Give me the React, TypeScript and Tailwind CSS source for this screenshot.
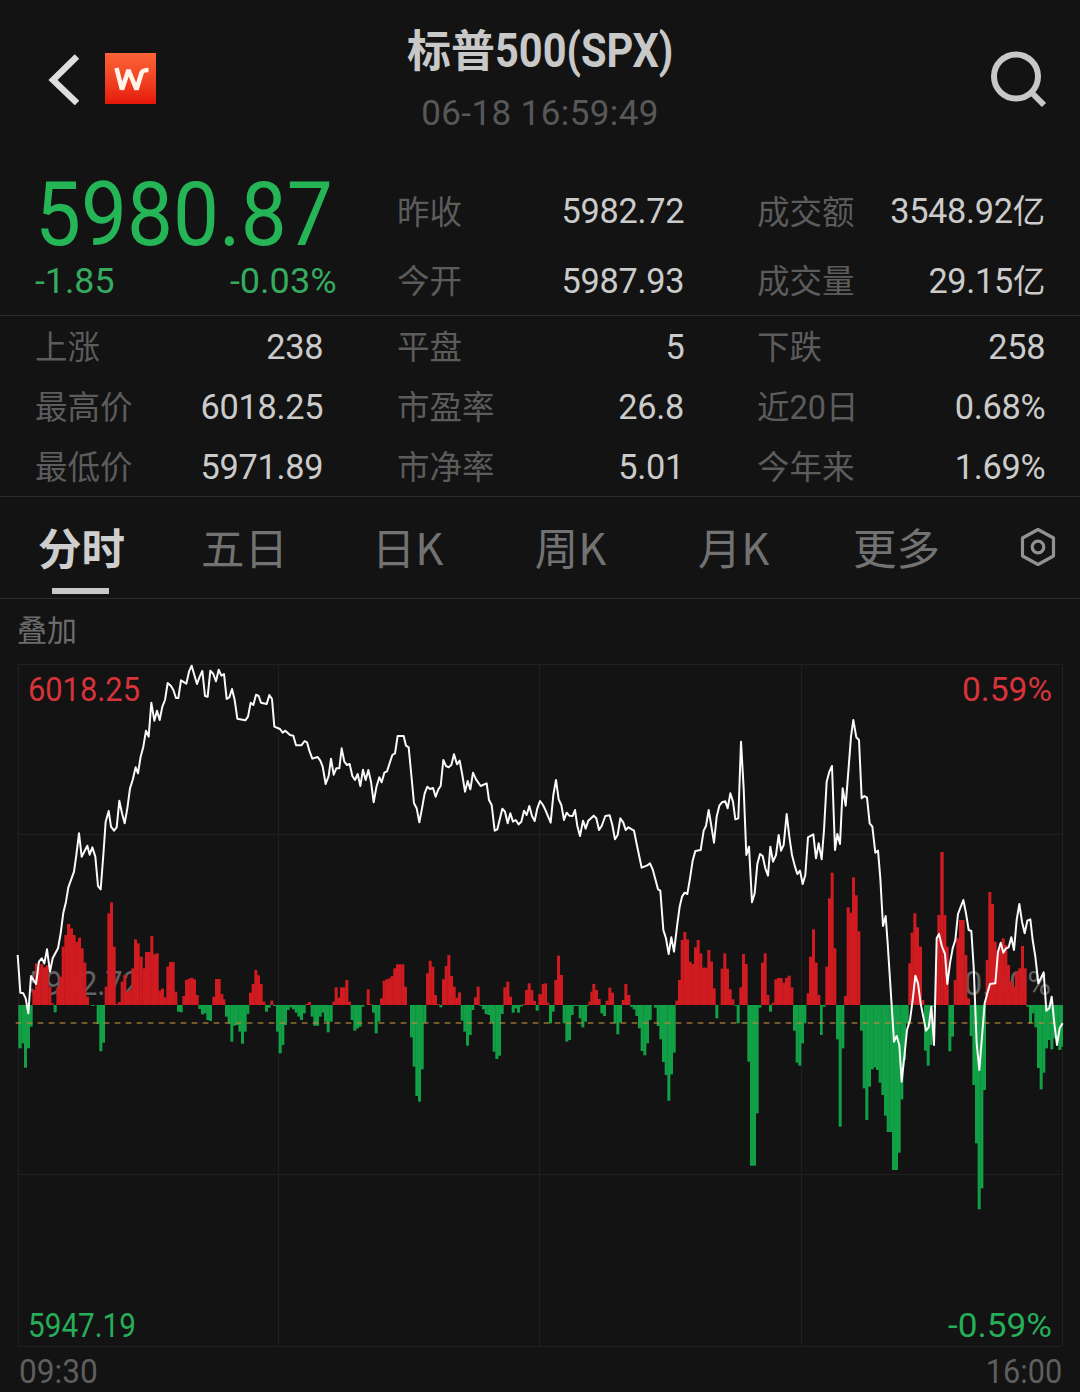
import React from "react";

type Pt = [number, number];
type Chunk = { x: number; y: number; data: number[] };

// Chart series are stored in third-of-a-pixel units relative to each chunk's origin.
const BASE = 1005;

const BARS: Chunk[] = [
  {
    x: 0,
    y: 880,
    data: [
      55, 505, 64, 490, 72, 563, 80, 505, 89, 440, 97, 330, 105, 250, 113, 262, 121, 252, 129, 262, 137, 256, 145, 320,
      153, 370, 161, 397, 169, 322, 177, 290, 185, 200, 193, 165, 201, 132, 210, 145, 218, 165, 226, 185, 234, 173, 242,
      205, 250, 248, 258, 350, 266, 375, 274, 378, 282, 375, 290, 432, 298, 514, 306, 488, 314, 320, 322, 100, 330, 67,
      338, 200, 346, 372, 354, 366, 362, 305, 370, 285, 378, 335, 386, 330, 394, 265, 402, 178, 410, 190, 418, 230, 427,
      265, 435, 216, 443, 216, 451, 168, 459, 223, 467, 220, 475, 332, 483, 326, 491, 352, 499, 260, 507, 246, 515, 246,
      523, 335, 531, 395, 539, 397, 547, 348, 555, 300, 563, 296, 571, 293, 579, 298, 587, 345, 595, 387, 603, 403, 611,
      400, 619, 420, 627, 423, 635, 375, 637, 350, 645, 297, 653, 297, 661, 342, 669, 358, 675, 410, 683, 430, 691, 485,
      699, 437, 707, 435, 715, 455, 723, 491, 731, 455, 739, 402, 747, 338, 755, 312, 763, 270, 771, 286, 779, 312, 787,
      365, 795, 395, 803, 383, 811, 362, 819, 378, 828, 375,
    ],
  },
  {
    x: 270,
    y: 700,
    data: [
      18, 995, 26, 1060, 34, 1035, 42, 975, 50, 930, 58, 922, 66, 928, 74, 938, 82, 950, 90, 960, 98, 940, 106, 912, 114,
      906, 122, 950, 130, 977, 138, 977, 146, 950, 154, 938, 162, 965, 170, 997, 178, 965, 187, 905, 194, 862, 202, 893,
      210, 862, 218, 862, 226, 840, 234, 905, 242, 960, 250, 992, 258, 985, 266, 980, 274, 920, 282, 915, 290, 868, 298,
      912, 306, 938, 314, 1000, 322, 965, 330, 895, 338, 842, 346, 838, 354, 835, 362, 828, 370, 805, 378, 793, 386, 793,
      394, 793, 402, 860, 410, 915, 420, 1012, 428, 1100, 436, 1188, 444, 1205, 452, 1108, 460, 968, 468, 820, 476, 782,
      484, 800, 492, 885, 500, 912, 508, 922, 516, 838, 524, 798, 532, 765, 540, 828, 548, 860, 556, 893, 564, 877, 572,
      962, 580, 995, 588, 1037, 596, 1005, 604, 930, 612, 892, 620, 860, 628, 918, 636, 928, 644, 942, 652, 945, 660, 968,
      668, 1055, 676, 1077, 684, 1067, 692, 942, 700, 862, 709, 845, 717, 890, 725, 938, 733, 925, 741, 938, 749, 920,
      757, 912, 765, 870, 773, 850, 781, 870, 789, 903, 797, 932, 805, 882, 813, 915,
    ],
  },
  {
    x: 540,
    y: 740,
    data: [
      0, 765, 5, 732, 13, 730, 20, 788, 27, 850, 35, 815, 43, 720, 51, 647, 59, 705, 68, 850, 76, 905, 84, 900, 92, 825,
      100, 798, 108, 798, 116, 835, 124, 862, 132, 845, 140, 798, 145, 785, 151, 755, 157, 732, 165, 750, 173, 777, 181,
      820, 189, 828, 197, 782, 205, 743, 213, 758, 221, 850, 229, 883, 237, 848, 245, 780, 253, 732, 261, 765, 270, 800,
      278, 808, 286, 828, 294, 865, 302, 933, 310, 946, 318, 910, 326, 840, 334, 795, 342, 803, 350, 858, 358, 898, 366,
      966, 374, 1005, 382, 1082, 390, 1003, 398, 938, 406, 782, 414, 720, 422, 600, 430, 576, 438, 598, 446, 665, 454,
      672, 462, 622, 470, 600, 478, 640, 486, 683, 494, 683, 502, 630, 510, 665, 518, 745, 526, 835, 534, 795, 542, 686,
      550, 640, 558, 686, 566, 748, 574, 778, 582, 797, 590, 850, 598, 742, 606, 642, 614, 672, 622, 965, 630, 1277, 647,
      1120, 655, 803, 663, 668, 671, 640, 679, 765, 687, 815, 695, 788, 703, 718, 711, 714, 719, 714, 727, 728, 735, 714,
      743, 707, 751, 742, 759, 872, 767, 968, 775, 977, 783, 910, 791, 850, 798, 795,
    ],
  },
  {
    x: 800,
    y: 940,
    data: [
      -2, 220, 3, 220, 5, 195, 20, 160, 27, 50, 36, -32, 44, 68, 52, 165, 60, 285, 67, 200, 76, 80, 84, -125, 92, -202,
      100, 25, 108, 298, 116, 560, 124, 325, 132, 168, 140, -98, 148, -82, 156, -188, 164, -134, 172, -26, 180, 272, 188,
      445, 196, 540, 204, 440, 212, 388, 220, 382, 228, 390, 236, 428, 244, 465, 252, 527, 260, 576, 268, 576, 276, 690,
      284, 690, 293, 638, 301, 478, 309, 360, 317, 250, 325, 70, 332, -22, 340, -80, 348, -38, 356, 20, 365, 180, 372,
      332, 380, 377, 388, 315, 396, 200, 404, 175, 408, 0, 412, -75, 421, -264, 430, -75, 438, 20, 445, 334, 453, 290,
      461, 120, 469, -5, 477, -60, 485, -60, 493, 45, 501, 175, 509, 288, 517, 435, 525, 610, 533, 808, 541, 745, 549,
      450, 557, 60, 565, -144, 573, -108, 581, 5, 589, 38, 597, 20, 605, -5, 613, 15, 621, 75, 629, 125, 637, 140, 645,
      95, 655, 85, 663, 18, 671, 85, 679, 200, 687, 250, 695, 220, 703, 262, 711, 384, 719, 448, 727, 398, 735, 325, 743,
      300, 751, 328, 759, 295, 767, 300, 775, 330, 783, 320, 788, 195,
    ],
  },
];

const PRICE: Chunk[] = [
  {
    x: 0,
    y: 880,
    data: [
      53, 225, 61, 338, 70, 340, 77, 355, 85, 400, 93, 288, 108, 312, 117, 245, 125, 235, 133, 250, 141, 208, 150, 275,
      158, 235, 174, 205, 182, 160, 190, 98, 198, 65, 205, 22, 222, -25, 229, -75, 237, -140, 245, -70, 262, -103, 269,
      -76, 277, -98, 286, -70, 294, 18, 302, 28, 310, -75, 317, -175, 326, -207, 333, -160, 342, -148, 350, -158, 358,
      -238, 366, -200, 374, -170, 382, -215, 390, -275, 398, -300, 407, -338, 414, -320, 422, -370, 430, -400, 438, -448,
      446, -430, 454, -532, 463, -478, 471, -508, 479, -480, 487, -520, 495, -540, 503, -591, 513, -582, 520, -570, 528,
      -546, 535, -546, 543, -599, 559, -589, 567, -625, 575, -643, 583, -615, 591, -588, 599, -610, 607, -627, 615, -552,
      623, -550, 631, -628, 640, -618, 648, -596, 656, -631, 664, -613, 672, -618, 680, -543, 688, -548, 696, -573, 704,
      -540, 712, -484, 736, -479, 744, -490, 752, -532, 760, -525, 768, -556, 776, -552, 783, -532, 800, -528, 808, -555,
      816, -543,
    ],
  },
  {
    x: 270,
    y: 700,
    data: [
      13, 80, 30, 87, 38, 98, 46, 92, 60, 105, 70, 107, 78, 136, 94, 136, 104, 123, 111, 127, 119, 155, 127, 176, 143,
      171, 151, 182, 158, 200, 167, 252, 176, 228, 183, 176, 191, 224, 199, 205, 208, 205, 215, 145, 223, 185, 231, 195,
      239, 192, 247, 228, 255, 240, 263, 222, 271, 258, 279, 209, 287, 240, 295, 210, 303, 245, 311, 307, 319, 262, 328,
      232, 335, 247, 343, 218, 351, 214, 367, 165, 375, 160, 383, 108, 401, 108, 408, 137, 416, 142, 424, 225, 432, 310,
      440, 325, 448, 367, 456, 325, 464, 280, 472, 260, 480, 267, 489, 264, 497, 290, 505, 268, 512, 258, 520, 180, 528,
      198, 536, 202, 544, 195, 552, 163, 561, 193, 569, 182, 577, 225, 585, 275, 593, 243, 601, 268, 609, 218, 618, 238,
      632, 258, 650, 250, 657, 300, 665, 315, 674, 392, 682, 388, 697, 326, 705, 335, 713, 370, 721, 340, 729, 365, 737,
      360, 746, 373, 754, 365, 762, 332, 770, 345, 778, 318, 786, 348, 794, 363, 802, 325,
    ],
  },
  {
    x: 540,
    y: 740,
    data: [
      0, 183, 9, 195, 17, 212, 32, 248, 40, 165, 48, 120, 56, 178, 64, 195, 72, 240, 80, 218, 88, 227, 98, 228, 105, 210,
      112, 258, 120, 288, 129, 242, 137, 266, 145, 242, 161, 227, 169, 235, 177, 270, 185, 258, 196, 228, 209, 226, 217,
      255, 225, 298, 233, 285, 241, 235, 250, 248, 257, 270, 265, 262, 282, 272, 290, 312, 305, 383, 322, 376, 330, 370,
      338, 388, 346, 418, 354, 448, 361, 452, 370, 570, 378, 595, 386, 642, 394, 592, 402, 635, 411, 560, 419, 500, 426,
      470, 434, 458, 442, 462, 450, 415, 458, 362, 466, 333, 482, 330, 491, 272, 498, 258, 506, 210, 514, 258, 522, 308,
      530, 230, 538, 197, 546, 187, 556, 184, 563, 205, 571, 160, 579, 185, 586, 238, 595, 235, 603, 5, 611, 145, 619,
      345, 627, 320, 636, 487, 644, 460, 652, 372, 660, 342, 668, 348, 676, 385, 684, 407, 691, 320, 699, 365, 708, 345,
      716, 285, 723, 332, 731, 315, 740, 222, 748, 290, 756, 345, 765, 380, 772, 402, 780, 392,
    ],
  },
  {
    x: 800,
    y: 940,
    data: [
      8, -168, 16, -195, 24, -308, 40, -317, 48, -245, 56, -290, 65, -242, 72, -330, 80, -475, 88, -505, 96, -522, 105,
      -270, 112, -318, 120, -288, 128, -455, 137, -403, 145, -505, 153, -610, 160, -660, 169, -608, 177, -600, 185, -425,
      193, -432, 201, -427, 209, -350, 217, -340, 226, -262, 234, -268, 241, -185, 249, -42, 257, -72, 263, 10, 282, 305,
      290, 288, 298, 315, 305, 425, 313, 350, 321, 270, 330, 240, 338, 180, 346, 107, 354, 130, 362, 190, 378, 272, 386,
      262, 394, 200, 402, 315, 407, 120, 410, -5, 417, -18, 426, 20, 435, 42, 442, 132, 450, 70, 458, 25, 466, 0, 474,
      -78, 490, -120, 498, -80, 506, -30, 514, -27, 521, 80, 530, 310, 538, 390, 546, 290, 554, 190, 562, 160, 570, 132,
      586, 130, 594, 35, 602, 8, 610, 38, 618, 25, 626, 22, 634, -8, 642, 30, 650, -60, 658, -108, 666, -55, 674, -20,
      682, -58, 691, -62, 698, 0, 706, 50, 715, 130, 731, 97, 739, 212, 748, 205, 755, 170, 763, 250, 771, 315, 779, 265,
      788, 250,
    ],
  },
];

function expand(chunk: Chunk): Pt[] {
  const out: Pt[] = [];
  for (let i = 0; i < chunk.data.length; i += 2) {
    out.push([chunk.x + chunk.data[i] / 3, chunk.y + chunk.data[i + 1] / 3]);
  }
  return out;
}

const barPoints = BARS.flatMap(expand);
const pricePath = PRICE.flatMap(expand)
  .map(([x, y]) => `${x.toFixed(2)},${y.toFixed(2)}`)
  .join(" ");

const LABEL = "pt-[2px] text-[32.5px] text-[#5c5c5c]";
const FONT = "font-[Roboto,'Noto_Sans_CJK_SC',sans-serif]";

function Stat({ label, value, unit }: { label: string; value: string; unit?: string }) {
  return (
    <div className="flex items-center justify-between pt-[2px] whitespace-nowrap">
      <span className={LABEL}>{label}</span>
      <span className="origin-right scale-x-[0.98] text-[35px] tracking-[-0.3px] text-[#cbcbcb]">
        {value}
        {unit && <span className="text-[33px]">{unit}</span>}
      </span>
    </div>
  );
}

function Chart() {
  return (
    <svg width="1080" height="688" viewBox="0 661 1080 688" className="block">
      <g stroke="#202020" strokeWidth="1" fill="none">
        <path d="M18 664.5H1062M18 834.5H1062M18 1174.5H1062M18 1346.5H1062" />
        <path d="M18.5 664V1346M278.5 664V1346M539.5 664V1346M801.5 664V1346M1062.5 664V1346" />
      </g>
      <g className={FONT} fontSize="32.5" fill="#626262">
        <text x="28" y="995" textLength="112" lengthAdjust="spacingAndGlyphs">5982.72</text>
        <text x="1051" y="995" textAnchor="end" textLength="87" lengthAdjust="spacingAndGlyphs">0.00%</text>
      </g>
      {barPoints.slice(0, -1).map(([x, y], i) => {
        const w = barPoints[i + 1][0] - x;
        const h = Math.abs(y - BASE);
        if (w <= 0 || h < 0.1) return null;
        return (
          <rect key={i} x={x} y={Math.min(y, BASE)} width={w + 0.35} height={h} fill={y < BASE ? "#d01b21" : "#12a046"} />
        );
      })}
      <path d="M15.7 1023H1062" stroke="#b98a3c" strokeOpacity="0.8" strokeWidth="1.3" strokeDasharray="5.7 5.3" />
      <polyline points={pricePath} fill="none" stroke="#fafafa" strokeWidth="2" strokeLinejoin="round" />
      <g className={FONT} fontSize="32.5">
        <text x="28" y="700.5" fill="#d8333b" textLength="112" lengthAdjust="spacingAndGlyphs">6018.25</text>
        <text x="1052" y="700.5" fill="#d8333b" textAnchor="end" textLength="90" lengthAdjust="spacingAndGlyphs">0.59%</text>
        <text x="28" y="1336.5" fill="#27ad58" textLength="108" lengthAdjust="spacingAndGlyphs">5947.19</text>
        <text x="1052" y="1336.5" fill="#27ad58" textAnchor="end" textLength="104" lengthAdjust="spacingAndGlyphs">-0.59%</text>
      </g>
    </svg>
  );
}

const TABS = ["分时", "五日", "日K", "周K", "月K", "更多"];

export default function App() {
  return (
    <div className={`h-[1392px] w-[1080px] overflow-hidden bg-[#131313] leading-none ${FONT}`}>
      <header className="flex h-[171px] justify-between">
        <div className="flex w-[300px] gap-[26px] pt-[53px] pl-[47px]">
          <svg width="32" height="52" viewBox="0 0 32 52" fill="none" stroke="#dedede" strokeWidth="6.4">
            <path d="M30 3.5L6 27L30 50" />
          </svg>
          <div className="flex h-[51px] w-[51px] items-center justify-center bg-linear-to-b from-[#fb6236] to-[#e61408]">
            <svg width="38" height="28" viewBox="0 0 38 28" fill="none" stroke="#fff3ea" strokeWidth="4.6" strokeLinejoin="bevel">
              <path d="M4.500 3L10 24.500L16.500 5L24.500 24.500L29.500 8Q30.500 5 36.500 5" />
            </svg>
          </div>
        </div>
        <div className="flex flex-col items-center pt-[26px]">
          <h1 className="flex h-[50px] w-[266px] items-center font-bold whitespace-nowrap text-[#c8c8c8]">
            <span className="w-[88px] pt-[2px] text-[44px]">标普</span>
            <span className="w-[178px] origin-left scale-x-[0.865] text-[48px]">500(SPX)</span>
          </h1>
          <p className="mt-[20px] text-[35px] tracking-[0.4px] whitespace-nowrap text-[#585858]">06-18 16:59:49</p>
        </div>
        <div className="flex w-[300px] justify-end pt-[47px] pr-[30px]">
          <svg width="62" height="62" viewBox="0 0 62 62" fill="none" stroke="#c8c8c8" strokeWidth="6">
            <circle cx="28" cy="29.5" r="22" />
            <path d="M43 45L56 58" />
          </svg>
        </div>
      </header>

      <section className="flex h-[145px] border-b border-[#2b2b2b]">
        <div className="w-[397px] pl-[35px]">
          <div className="h-[90px] w-[300px] origin-left scale-x-[0.92] text-[89px] leading-[88px] text-[#25b456]">5980.87</div>
          <div className="flex w-[302px] justify-between pt-[3px] text-[35px] leading-[36px] text-[#35ab5f]">
            <span className="origin-left scale-x-[1.02]">-1.85</span>
            <span className="origin-right scale-x-[1.03]">-0.03%</span>
          </div>
        </div>
        <div className="grid w-[287px] grid-rows-2 pt-[5px]">
          <Stat label="昨收" value="5982.72" />
          <Stat label="今开" value="5987.93" />
        </div>
        <div className="ml-[73px] grid w-[288px] grid-rows-2 pt-[5px]">
          <Stat label="成交额" value="3548.92" unit="亿" />
          <Stat label="成交量" value="29.15" unit="亿" />
        </div>
      </section>

      <section className="flex h-[181px] border-b border-[#2b2b2b] pl-[35px]">
        <div className="grid w-[288px] grid-rows-3">
          <Stat label="上涨" value="238" />
          <Stat label="最高价" value="6018.25" />
          <Stat label="最低价" value="5971.89" />
        </div>
        <div className="ml-[74px] grid w-[287px] grid-rows-3">
          <Stat label="平盘" value="5" />
          <Stat label="市盈率" value="26.8" />
          <Stat label="市净率" value="5.01" />
        </div>
        <div className="ml-[73px] grid w-[288px] grid-rows-3">
          <Stat label="下跌" value="258" />
          <Stat label="近20日" value="0.68%" />
          <Stat label="今年来" value="1.69%" />
        </div>
      </section>

      <nav className="flex h-[102px] border-b border-[#2b2b2b] font-['Noto_Sans_CJK_SC',sans-serif] text-[43.5px]">
        {TABS.map((tab, i) => (
          <div
            key={tab}
            className={`flex w-[163px] flex-col items-center pt-[28px] ${i === 0 ? "font-bold text-[#cecece]" : "text-[#727272]"}`}
          >
            <span className="h-[44px]">{tab}</span>
            {i === 0 && <span className="mt-[19px] mr-[2px] h-[6px] w-[57px] bg-[#c8c8c8]" />}
          </div>
        ))}
        <div className="pt-[29px] pl-[42px]">
          <svg width="36" height="42" viewBox="0 0 36 42" fill="none" stroke="#929292" strokeWidth="3.2" strokeLinejoin="round">
            <path d="M18 3.5L33.500 12V30L18 38.500L2.500 30V12Z" />
            <circle cx="18" cy="21" r="5.8" />
          </svg>
        </div>
      </nav>

      <div className="flex h-[62px] items-center pt-[2px] pl-[17px] text-[30px] text-[#6c6c6c]">叠加</div>
      <Chart />
      <div className="flex justify-between pt-[4px] pr-[18px] pl-[19px] text-[33px] leading-[37px] text-[#5e5e5e]">
        <span className="origin-left scale-x-[0.96]">09:30</span>
        <span className="origin-right scale-x-[0.93]">16:00</span>
      </div>
    </div>
  );
}
